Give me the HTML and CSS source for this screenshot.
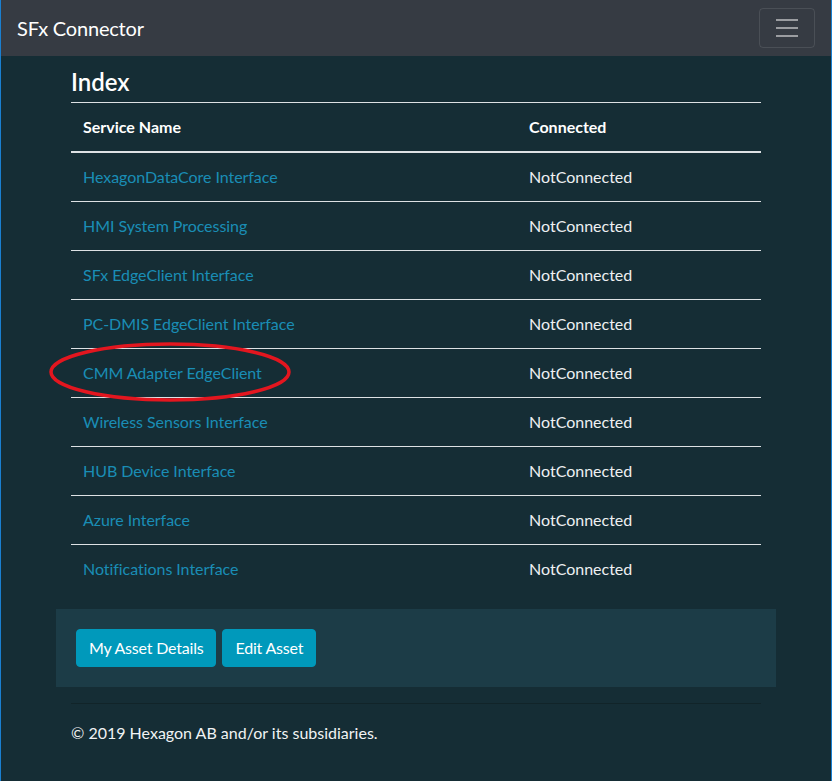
FILE: index.html
```html
<!DOCTYPE html>
<html lang="en">
<head>
<meta charset="utf-8">
<title>Index - SFx Connector</title>
<link rel="stylesheet" href="styles.css">
</head>
<body>
<div class="frame">
  <header class="navbar">
    <a class="brand" href="#">SFx Connector</a>
    <button class="toggler" type="button" aria-label="Toggle navigation">
      <svg width="30" height="30" viewBox="0 0 30 30" aria-hidden="true">
        <path d="M4 7h22M4 15h22M4 23h22" stroke="rgba(255,255,255,0.5)" stroke-width="2" stroke-linecap="butt"/>
      </svg>
    </button>
  </header>

  <main class="container">
    <h4 class="title">Index</h4>
    <div class="table-wrap">
      <table class="table">
        <thead>
          <tr><th class="col-name">Service Name</th><th>Connected</th></tr>
        </thead>
        <tbody>
          <tr><td><a href="#">HexagonDataCore Interface</a></td><td>NotConnected</td></tr>
          <tr><td><a href="#">HMI System Processing</a></td><td>NotConnected</td></tr>
          <tr><td><a href="#">SFx EdgeClient Interface</a></td><td>NotConnected</td></tr>
          <tr><td><a href="#">PC-DMIS EdgeClient Interface</a></td><td>NotConnected</td></tr>
          <tr><td><a href="#">CMM Adapter EdgeClient</a></td><td>NotConnected</td></tr>
          <tr><td><a href="#">Wireless Sensors Interface</a></td><td>NotConnected</td></tr>
          <tr><td><a href="#">HUB Device Interface</a></td><td>NotConnected</td></tr>
          <tr><td><a href="#">Azure Interface</a></td><td>NotConnected</td></tr>
          <tr><td><a href="#">Notifications Interface</a></td><td>NotConnected</td></tr>
        </tbody>
      </table>
      <svg class="annotation" width="250" height="66" viewBox="0 0 250 66" aria-hidden="true">
        <ellipse cx="125" cy="32" rx="119" ry="28" fill="none" stroke="#e3161f" stroke-width="3.5"/>
      </svg>
    </div>
  </main>

  <section class="panel">
    <a class="btn" href="#">My Asset Details</a>
    <a class="btn" href="#">Edit Asset</a>
  </section>

  <footer class="footer">
    <hr class="rule">
    <p class="copy">© 2019 Hexagon AB and/or its subsidiaries.</p>
  </footer>
</div>
</body>
</html>
```

FILE: styles.css
```css
* { box-sizing: border-box; }

html, body {
  margin: 0;
  padding: 0;
  height: 100%;
}

body {
  background: #152d35;
  font-family: "Segoe UI", Lato, "Open Sans", sans-serif;
  font-size: 16px;
  line-height: 24px;
  color: #e9ecef;
}

.frame {
  min-height: 100%;
  border-left: 1px solid #1a7fd0;
  border-right: 1px solid #1a7fd0;
}

.navbar {
  height: 56px;
  background: #363b43;
  display: flex;
  align-items: center;
  justify-content: space-between;
  padding: 0 16px;
}

.brand {
  color: #fff;
  font-size: 20px;
  line-height: 30px;
  letter-spacing: -0.2px;
  text-decoration: none;
}

.toggler {
  width: 56px;
  height: 40px;
  padding: 0;
  background: transparent;
  border: 1px solid rgba(255,255,255,0.1);
  border-radius: 4px;
  display: flex;
  align-items: center;
  justify-content: center;
}

.toggler svg { display: block; }

.container {
  width: 720px;
  margin: 0 auto;
  padding: 0 15px;
}

.title {
  margin: 12px 0 6px;
  font-size: 24px;
  line-height: 28px;
  font-weight: 600;
  color: #fff;
}

.table-wrap {
  position: relative;
}

.table {
  width: 100%;
  border-collapse: collapse;
  margin-bottom: 16px;
}

.table th,
.table td {
  padding: 12px;
  text-align: left;
  vertical-align: top;
  border-top: 1px solid #dde1e4;
}

.table th {
  color: #fff;
  font-weight: 700;
  border-bottom: 2px solid #dde1e4;
}

.col-name { width: 446px; }

.table td { color: #eef0f2; }

.table a {
  color: #1a8db5;
  letter-spacing: -0.05px;
  text-decoration: none;
}

.annotation {
  position: absolute;
  left: -26px;
  top: 238px;
  pointer-events: none;
}

.panel {
  width: 720px;
  margin: 0 auto;
  padding: 20px;
  background: #1c3c47;
  display: flex;
  gap: 6px;
}

.btn {
  display: inline-block;
  padding: 6px 12px;
  border: 1px solid #0099bb;
  border-radius: 4px;
  background: #0099bb;
  color: #fff;
  font-size: 16px;
  line-height: 24px;
  letter-spacing: -0.2px;
  text-decoration: none;
}

.footer {
  width: 720px;
  margin: 0 auto;
  padding: 0 15px;
}

.rule {
  margin: 16px 0 0;
  border: 0;
  border-top: 1px solid #112429;
}

.copy {
  margin: 0;
  padding-top: 17px;
  color: #f1f3f4;
}
```
